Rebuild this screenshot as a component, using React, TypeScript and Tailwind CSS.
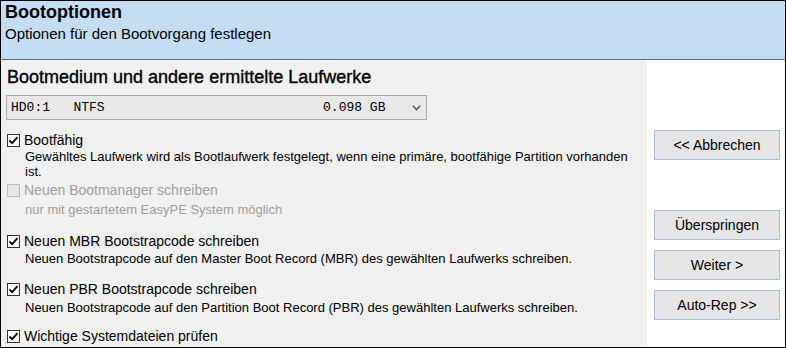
import React from "react";

const font = { fontFamily: '"Liberation Sans", Arial, sans-serif' };

const Check = ({ checked, disabled }: { checked?: boolean; disabled?: boolean }) => (
  <span
    className={
      "inline-flex h-[13px] w-[13px] shrink-0 items-center justify-center border " +
      (disabled ? "border-[#bcbcbc] bg-[#e6e6e6]" : "border-[#333333] bg-white")
    }
  >
    {checked && (
      <svg width="11" height="11" viewBox="0 0 11 11">
        <path d="M1.5 5.5 L4.2 8.2 L9.5 2.2" fill="none" stroke="#000" strokeWidth="1.8" />
      </svg>
    )}
  </span>
);

const Option = ({
  label,
  desc,
  checked,
  disabled,
  className,
}: {
  label: string;
  desc?: React.ReactNode;
  checked?: boolean;
  disabled?: boolean;
  className?: string;
}) => (
  <div className={className}>
    <label className="flex items-center gap-[4px] pl-[6px]">
      <Check checked={checked} disabled={disabled} />
      <span className={"text-[14px] leading-[16px] " + (disabled ? "text-[#a0a0a0]" : "text-black")}>
        {label}
      </span>
    </label>
    {desc}
  </div>
);

const Btn = ({ children, className }: { children: React.ReactNode; className?: string }) => (
  <button
    className={
      "h-[30px] w-[126px] border border-[#a6c0dc] bg-[#e5e5e5] text-[14px] text-black " + (className || "")
    }
  >
    {children}
  </button>
);

export default function App() {
  return (
    <div style={font} className="flex h-[348px] w-[786px] flex-col border border-black bg-white">
      <div className="h-[59px] shrink-0 border-b border-[#5d6a77] bg-[#c3ddf4] pl-[4px]">
        <div className="text-[18px] font-bold leading-[22px] text-black">Bootoptionen</div>
        <div className="mt-[2px] text-[15px] leading-[18px] text-black">Optionen für den Bootvorgang festlegen</div>
      </div>
      <div className="flex flex-1">
        <div className="flex-1 bg-[#f0f0f0]">
          <div className="mt-[6px] pl-[6px] text-[18px] leading-[22px] text-black [-webkit-text-stroke:0.35px_black]">
            Bootmedium und andere ermittelte Laufwerke
          </div>
          <div className="ml-[5px] mt-[7px] flex h-[25px] w-[421px] items-center justify-between border border-[#adadad] bg-[#e8e8e8] pl-[4px] pr-[5px]">
            <span
              className="whitespace-pre text-[13px] text-black"
              style={{ fontFamily: '"Liberation Mono", "Courier New", monospace' }}
            >
              {"HD0:1   NTFS                            0.098 GB"}
            </span>
            <svg width="9" height="6" viewBox="0 0 9 6">
              <path d="M0.8 0.8 L4.5 4.5 L8.2 0.8" fill="none" stroke="#606060" strokeWidth="1.6" />
            </svg>
          </div>
          <Option
            className="mt-[12px]"
            label="Bootfähig"
            checked
            desc={
              <div className="mt-[1px] pl-[24px] pr-[8px] text-[13px] leading-[15px] text-black">
                Gewähltes Laufwerk wird als Bootlaufwerk festgelegt, wenn eine primäre, bootfähige Partition vorhanden
                ist.
              </div>
            }
          />
          <Option
            className="mt-[3px]"
            label="Neuen Bootmanager schreiben"
            disabled
            desc={<div className="mt-[4px] pl-[24px] text-[13px] leading-[15px] text-[#a0a0a0]">nur mit gestartetem EasyPE System möglich</div>}
          />
          <Option
            className="mt-[16px]"
            label="Neuen MBR Bootstrapcode schreiben"
            checked
            desc={
              <div className="mt-[2px] pl-[24px] text-[13px] leading-[15px] text-black">
                Neuen Bootstrapcode auf den Master Boot Record (MBR) des gewählten Laufwerks schreiben.
              </div>
            }
          />
          <Option
            className="mt-[15px]"
            label="Neuen PBR Bootstrapcode schreiben"
            checked
            desc={
              <div className="mt-[3px] pl-[24px] text-[13px] leading-[15px] text-black">
                Neuen Bootstrapcode auf den Partition Boot Record (PBR) des gewählten Laufwerks schreiben.
              </div>
            }
          />
          <Option className="mt-[13px]" label="Wichtige Systemdateien prüfen" checked />
        </div>
        <div className="flex w-[138px] flex-col items-start bg-white pl-[7px]">
          <Btn className="mt-[70px]">&lt;&lt; Abbrechen</Btn>
          <Btn className="mt-[50px]">Überspringen</Btn>
          <Btn className="mt-[10px]">Weiter &gt;</Btn>
          <Btn className="mt-[10px]">Auto-Rep &gt;&gt;</Btn>
        </div>
      </div>
    </div>
  );
}
